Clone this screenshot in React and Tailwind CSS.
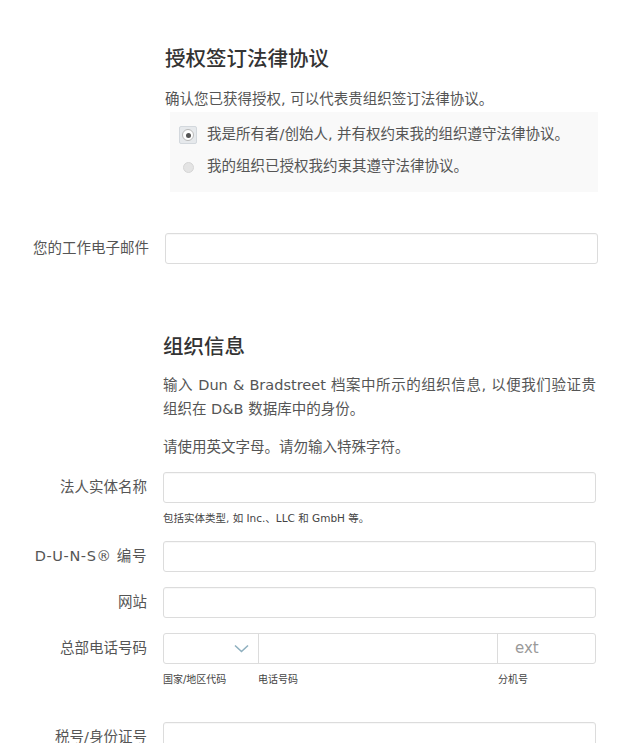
import React from 'react';

const font = { fontFamily: '"DejaVu Sans", "Noto Sans CJK SC", sans-serif' };

const Field = ({ label, children, className = '', labelClass = '' }) => (
  <div className={`flex items-center pr-[44px] ${className}`}>
    <div className={`w-[147px] shrink-0 whitespace-nowrap text-right text-[14.5px] text-[#555] ${labelClass}`}>{label}</div>
    <div className="ml-[16px] flex-1">{children}</div>
  </div>
);

const Input = ({ placeholder }) => (
  <input
    placeholder={placeholder}
    className="block h-[31px] w-full rounded-[3px] border border-[#dcdcdc] bg-white px-3 text-[14px] shadow-[inset_0_1px_1px_rgba(0,0,0,0.03)] outline-none"
  />
);

export default function App() {
  return (
    <div style={font} className="h-[743px] w-[640px] overflow-hidden bg-white pt-[45px] text-[#555]">
      {/* Autorización */}
      <div className="pl-[165px] pr-[42px]">
        <h2 className="text-[20.5px] leading-[28px] font-medium text-[#333]">授权签订法律协议</h2>
        <p className="mt-[16px] text-[14.5px] leading-[20px] text-[#555]">确认您已获得授权, 可以代表贵组织签订法律协议。</p>
        <div className="ml-[5px] mt-[3px] bg-[#f9f9f9] pt-[7px] pb-[9px] pl-[9px]">
          <label className="flex h-8 items-center">
            <span className="flex h-[18px] w-[18px] items-center justify-center rounded-[2px] border border-[#d3d8dd] bg-[#e6e9ec]">
              <span className="flex h-[12px] w-[12px] items-center justify-center rounded-full border border-[#b8b8b8] bg-white">
                <span className="h-[5px] w-[5px] rounded-full bg-[#555]" />
              </span>
            </span>
            <span className="ml-[10px] whitespace-nowrap text-[14.5px] text-[#555]">我是所有者/创始人, 并有权约束我的组织遵守法律协议。</span>
          </label>
          <label className="flex h-8 items-center">
            <span className="flex h-[18px] w-[18px] items-center justify-center">
              <span className="h-[11px] w-[11px] rounded-full border border-[#d6d6d6] bg-[#e4e4e4]" />
            </span>
            <span className="ml-[10px] text-[14.5px] text-[#555]">我的组织已授权我约束其遵守法律协议。</span>
          </label>
        </div>
      </div>

      {/* Email */}
      <div className="mt-[41px] flex items-center pr-[42px]">
        <div className="w-[149px] shrink-0 whitespace-nowrap text-right text-[14.5px] text-[#555]">您的工作电子邮件</div>
        <div className="ml-[16px] flex-1"><Input /></div>
      </div>

      {/* Organización */}
      <div className="mt-[69px] pl-[163px] pr-[44px]">
        <h2 className="text-[20.5px] leading-[28px] font-medium text-[#333]">组织信息</h2>
        <div className="mt-[12px] text-[14.5px] leading-[24px] text-[#555]">
          <p className="whitespace-nowrap text-justify [text-align-last:justify]">输入 Dun &amp; Bradstreet 档案中所示的组织信息, 以便我们验证贵</p>
          <p>组织在 D&amp;B 数据库中的身份。</p>
        </div>
        <p className="mt-[14px] text-[14.5px] leading-[24px] text-[#555]">请使用英文字母。请勿输入特殊字符。</p>
      </div>

      <Field label="法人实体名称" className="mt-[13px]"><Input /></Field>
      <div className="ml-[163px] mt-[8px] text-[10.5px] leading-[14px] text-[#444]">包括实体类型, 如 Inc.、LLC 和 GmbH 等。</div>

      <Field label="D-U-N-S® 编号" labelClass="tracking-[0.6px]" className="mt-[16px]"><Input /></Field>
      <Field label="网站" className="mt-[15px]"><Input /></Field>

      <Field label="总部电话号码" className="mt-[15px]">
        <div className="flex h-[31px] w-full overflow-hidden rounded-[3px] border border-[#dcdcdc] bg-white">
          <div className="flex w-[95px] shrink-0 items-center justify-end border-r border-[#dcdcdc] pr-[9px]">
            <svg width="15" height="9" viewBox="0 0 15 9" fill="none">
              <path d="M1 1.5 7.5 7.5 14 1.5" stroke="#8fb0bf" strokeWidth="1.6" />
            </svg>
          </div>
          <div className="flex-1 border-r border-[#dcdcdc]" />
          <div className="flex w-[97px] shrink-0 items-center pl-[17px] text-[15px] text-[#9a9a9a]">ext</div>
        </div>
      </Field>
      <div className="ml-[163px] mr-[44px] mt-[9px] flex text-[10px] leading-[14px] text-[#444]">
        <span className="w-[95px]">国家/地区代码</span>
        <span className="flex-1">电话号码</span>
        <span className="w-[98px]">分机号</span>
      </div>

      <Field label="税号/身份证号" className="mt-[35px]"><Input /></Field>
    </div>
  );
}
